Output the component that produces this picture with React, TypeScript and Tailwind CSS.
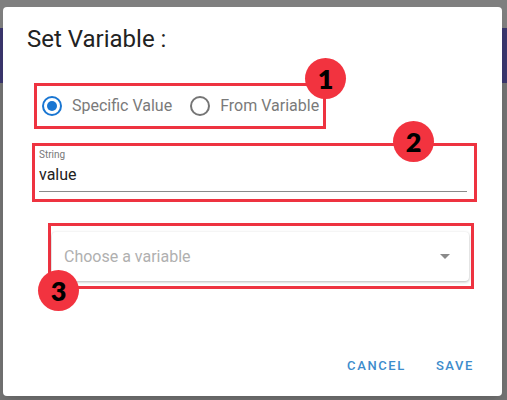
import React from 'react';

const Badge = ({ n, className }: { n: string; className: string }) => (
  <div
    className={`absolute w-[41px] h-[41px] rounded-full bg-[#f2333f] flex items-center justify-center text-black text-[27px] font-extrabold leading-none ${className}`}
    style={{ fontFamily: 'Lato, "Open Sans", sans-serif' }}
  >
    {n}
  </div>
);

const Radio = ({ checked, label }: { checked: boolean; label: string }) => (
  <div className="flex items-center gap-[10px]">
    <div
      className={`w-[20px] h-[20px] rounded-full border-2 flex items-center justify-center ${
        checked ? 'border-[#1976d2]' : 'border-[#757575]'
      }`}
    >
      {checked && <div className="w-[10px] h-[10px] rounded-full bg-[#1976d2]" />}
    </div>
    <span className="text-[16px] text-[#7a7a7a]">{label}</span>
  </div>
);

const App = () => {
  return (
    <div
      className="relative w-[507px] h-[400px] overflow-hidden bg-[#7a7a7a]"
      style={{ fontFamily: 'Roboto, "Liberation Sans", sans-serif' }}
    >
      {/* page behind the dialog */}
      <div className="h-[28px] bg-[#7f7f7f]" />
      <div className="h-[55px] bg-[#3b376e]" />
      <div className="h-[317px] bg-[#737373]" />

      <div className="absolute left-[3px] top-[7px] w-[499px] h-[389px] bg-white rounded-[4px] shadow-lg flex flex-col">
        <div className="pl-[24px] pt-[18px] text-[24px] text-[#222] leading-[28px]">
          Set Variable :
        </div>

        <div className="relative ml-[31px] mt-[30px] w-[292px] h-[46px] border-[3px] border-[#ee3340] flex items-center pl-[5px] gap-[18px]">
          <Radio checked label="Specific Value" />
          <Radio checked={false} label="From Variable" />
          <Badge n="1" className="left-[268px] top-[-28px]" />
        </div>

        <div className="relative ml-[29px] mt-[14px] w-[445px] h-[59px] border-[3px] border-[#ee3340] px-[4px] pt-[3px]">
          <div className="text-[10px] text-[#777] leading-[12px]">String</div>
          <div className="text-[16px] text-[#222] leading-[20px] mt-[4px]">value</div>
          <div className="mt-[6px] h-px bg-[#8a8a8a] w-[428px]" />
          <Badge n="2" className="left-[358px] top-[-25px]" />
        </div>

        <div className="relative ml-[45px] mt-[21px] w-[426px] h-[66px] border-[3px] border-[#ee3340] pt-[6px] pl-[1px]">
          <div className="w-[417px] h-[49px] bg-white rounded-[4px] shadow-[0_1px_3px_rgba(0,0,0,0.3)] flex items-center justify-between pl-[12px] pr-[19px]">
            <span className="text-[16px] text-[#b0b0b0]">Choose a variable</span>
            <div className="w-0 h-0 border-l-[5px] border-r-[5px] border-t-[5px] border-l-transparent border-r-transparent border-t-[#8a8a8a]" />
          </div>
          <Badge n="3" className="left-[-13px] top-[44px]" />
        </div>

        <div className="flex-1" />
        <div className="flex justify-end items-center gap-[30px] pr-[28px] pb-[21px]">
          <span className="text-[13px] font-medium tracking-[1.6px] text-[#3d8ccc]">CANCEL</span>
          <span className="text-[13px] font-medium tracking-[1.6px] text-[#3d8ccc]">SAVE</span>
        </div>
      </div>
    </div>
  );
};

export default App;
